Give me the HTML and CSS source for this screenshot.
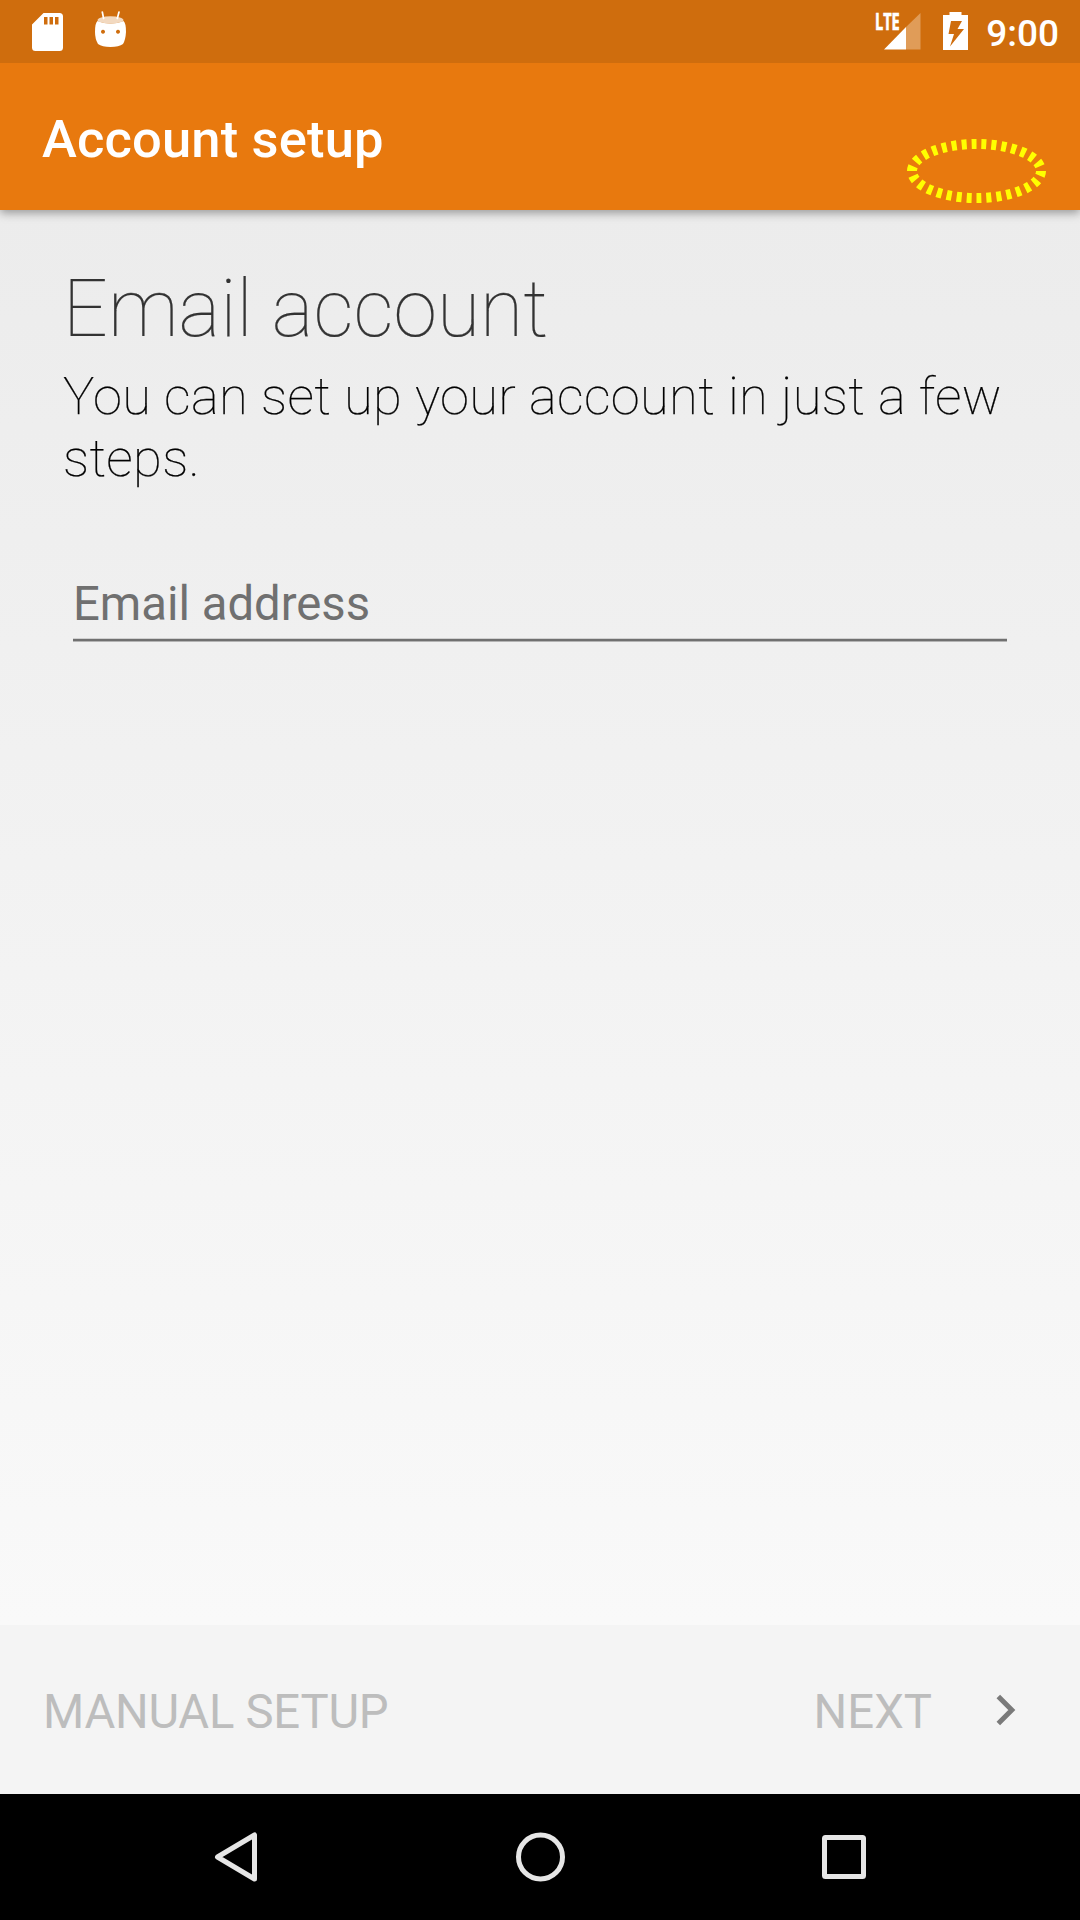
FILE: index.html
```html
<!DOCTYPE html>
<html lang="en">
<head>
<meta charset="utf-8">
<title>Account setup</title>
<link rel="stylesheet" href="styles.css">
</head>
<body>
<div class="screen">
  <div class="status-bar">
    <div class="notifications">
      <svg width="31" height="38" viewBox="0 0 31 38"><path fill="#fff" fill-rule="evenodd" d="M11.5 0H27.5Q31 0 31 3.5V34.500Q31 38 27.500 38H3.500Q0 38 0 34.500V11.500ZM12 4V11.500H15.500V4ZM17.500 4V11.500H21V4ZM23 4V11.500H26.500V4Z"/></svg>
      <svg class="robot" width="31" height="37" viewBox="0 0 31 37">
        <path fill="#fff" fill-rule="evenodd" d="M2.500 10Q15.500 15 28.500 10Q31 12 31 21Q30.500 29 28 33Q24 36 15.500 36Q7 36 3 33Q0 28 0 21Q0 12 2.500 10ZM8 18.700a2 2 0 1 0 .01 0ZM23 18.700a2 2 0 1 0 .01 0Z"/>
        <ellipse cx="15.500" cy="9" rx="13" ry="3.700" fill="#f2d9c0"/>
        <path d="M7.300 1 8.600 7.500M24 1 22.300 7.500" stroke="#fff" stroke-width="1.700" stroke-linecap="round"/>
      </svg>
    </div>
    <div class="system-icons">
      <div class="signal">
        <svg width="46" height="38" viewBox="0 0 46 38"><path d="M45.500 1V37.500H31V15Z" fill="#e09c58"/><path d="M31 15V37.500H9Z" fill="#fff"/></svg>
        <span class="lte">LTE</span>
      </div>
      <svg width="25" height="38" viewBox="0 0 25 38"><path fill="#fff" fill-rule="evenodd" d="M6.500 0H18.500V3H25V38H0V3H6.500ZM8 9 5.500 22H11L7 34.500 21 17H14.500L19 9Z"/></svg>
      <span class="clock">9:00</span>
    </div>
  </div>
  <header class="app-bar">
    <h1 class="app-title">Account setup</h1>
    <svg class="highlight" width="140" height="66" viewBox="0 0 140 66"><ellipse cx="69.500" cy="33" rx="64.500" ry="27" pathLength="300" fill="none" stroke="#ff0" stroke-width="10" stroke-dasharray="5 5"/></svg>
  </header>
  <main class="content">
    <h2 class="heading">Email account</h2>
    <p class="intro">You can set up your account in just a few steps.</p>
    <input class="email" type="text" placeholder="Email address" aria-label="Email address">
  </main>
  <footer class="actions">
    <span class="action manual">MANUAL SETUP</span>
    <span class="action next">NEXT
      <svg width="20" height="33" viewBox="0 0 20 33"><path d="M2.300 2.500 15.800 16 2.300 29.500" fill="none" stroke="#7a7a7a" stroke-width="5"/></svg>
    </span>
  </footer>
  <nav class="nav-bar">
    <svg width="54" height="54" viewBox="0 0 54 54"><path d="M44.500 5V49L7.500 27Z"/></svg>
    <svg width="54" height="54" viewBox="0 0 54 54"><circle cx="26.500" cy="27" r="22"/></svg>
    <svg width="54" height="54" viewBox="0 0 54 54"><rect x="7.500" y="7.500" width="39" height="39" rx="1"/></svg>
  </nav>
</div>
</body>
</html>
```
FILE: styles.css
```css
* { box-sizing: border-box; }
body { margin: 0; font-family: Roboto, sans-serif; }
svg { display: block; flex: none; }

.screen {
  display: flex;
  flex-direction: column;
  width: 1080px;
  height: 1920px;
  overflow: hidden;
}

.status-bar {
  position: relative;
  z-index: 2;
  display: flex;
  justify-content: space-between;
  flex: 0 0 63px;
  padding: 0 21px 0 32px;
  background: #cf6d0d;
  color: #fff;
}
.notifications { display: flex; gap: 32px; padding-top: 12.5px; }
.robot { margin-top: -2px; }
.system-icons { display: flex; align-items: flex-start; padding-top: 12px; }
.signal { position: relative; margin-right: 22px; }
.lte {
  position: absolute;
  left: 0;
  top: 0;
  font: 700 23px/18px "Open Sans", sans-serif;
  -webkit-text-stroke: 0.7px #fff;
  transform: scaleX(0.63);
  transform-origin: left;
}
.clock { margin: 0 0 0 18px; font-size: 37px; font-weight: 500; line-height: 43px; }

.app-bar {
  position: relative;
  z-index: 1;
  display: flex;
  align-items: center;
  flex: 0 0 147px;
  padding: 5px 42px 0;
  background: #e8790e;
  color: #fff;
  box-shadow: 0 3px 9px rgba(0, 0, 0, 0.36);
}
.app-title { margin: 0; font-size: 52.5px; font-weight: 500; line-height: 62px; letter-spacing: 0.15px; }
.highlight { position: absolute; left: 907px; top: 75px; }

.content {
  flex: 1;
  padding: 53px 63px 0;
  background: linear-gradient(#ececec, #f9f9f9);
}
.heading { margin: 0 0 10px; color: #333; font-size: 78.75px; font-weight: 100; line-height: 92px; letter-spacing: 0.08px; -webkit-text-stroke: 0.2px #333; }
.intro { margin: 0; color: #000; font-size: 52.5px; font-weight: 100; line-height: 62px; letter-spacing: 0.31px; -webkit-text-stroke: 0.25px #000; }
.email {
  display: block;
  width: 934px;
  height: 66px;
  margin: 86px 0 0 10px;
  padding: 0 0 6px;
  border: 0;
  border-bottom: 2px solid #707070;
  border-radius: 0;
  outline: 0;
  background: transparent;
  box-shadow: 0 1px #b4b4b4, inset 0 -1px #d0d0d0;
  font: 400 47.25px/58px Roboto, sans-serif;
}
.email::placeholder { color: #707070; opacity: 1; }

.actions {
  display: flex;
  justify-content: space-between;
  align-items: center;
  flex: 0 0 169px;
  padding: 5px 64px 0 43px;
  background: #f4f4f4;
}
.action { color: #bdbdbd; font-size: 47.25px; line-height: 56px; }
.manual { letter-spacing: -0.25px; }
.next { display: flex; align-items: center; gap: 64px; }
.next svg { margin-top: -4px; }

.nav-bar {
  display: flex;
  justify-content: space-between;
  align-items: center;
  flex: 0 0 126px;
  padding: 0 209px 0 210px;
  background: #000;
}
.nav-bar svg { fill: none; stroke: #e6e6e6; stroke-width: 5; stroke-linejoin: round; }
```
